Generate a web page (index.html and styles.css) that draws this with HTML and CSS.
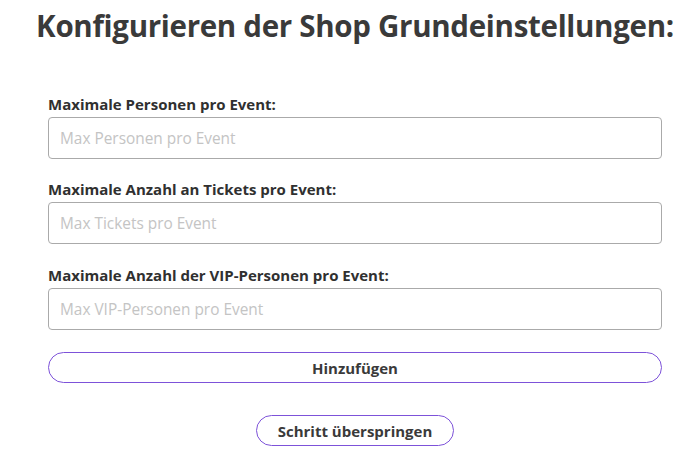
FILE: index.html
```html
<!DOCTYPE html>
<html lang="de">
<head>
<meta charset="utf-8">
<link rel="stylesheet" href="styles.css">
</head>
<body>
<div class="page">
  <h1 class="title">Konfigurieren der Shop Grundeinstellungen:</h1>
  <form class="form">
    <div class="field">
      <label class="label">Maximale Personen pro Event:</label>
      <input class="input" type="text" placeholder="Max Personen pro Event">
    </div>
    <div class="field">
      <label class="label">Maximale Anzahl an Tickets pro Event:</label>
      <input class="input" type="text" placeholder="Max Tickets pro Event">
    </div>
    <div class="field">
      <label class="label">Maximale Anzahl der VIP-Personen pro Event:</label>
      <input class="input" type="text" placeholder="Max VIP-Personen pro Event">
    </div>
    <button class="btn btn-wide" type="button">Hinzufügen</button>
    <div class="skip-row">
      <button class="btn btn-skip" type="button">Schritt überspringen</button>
    </div>
  </form>
</div>
</body>
</html>
```
FILE: styles.css
```css
html, body {
  margin: 0;
  padding: 0;
  background: #ffffff;
}
body {
  font-family: "Open Sans", "Noto Sans", sans-serif;
  color: #3a3a3a;
  overflow: hidden;
}
.page {
  width: 614px;
  margin-left: 48px;
  display: flex;
  flex-direction: column;
}
.title {
  margin: 6px -40px 0 -40px;
  font-size: 29.5px;
  font-weight: 700;
  text-align: center;
  line-height: 40px;
  color: #3a3a3a;
  white-space: nowrap;
  letter-spacing: -0.3px;
}
.form {
  margin-top: 49px;
  display: flex;
  flex-direction: column;
}
.field {
  display: flex;
  flex-direction: column;
  margin-bottom: 21px;
}
.field:nth-child(2) {
  margin-bottom: 22px;
}
.label {
  font-size: 15px;
  font-weight: 700;
  line-height: 18px;
  margin-bottom: 4px;
  color: #303030;
}
.input {
  height: 42px;
  box-sizing: border-box;
  border: 1px solid #aaaaaa;
  border-radius: 4px;
  padding: 0 11px;
  font-family: inherit;
  font-size: 15.4px;
  color: #333;
  outline: none;
}
.input::placeholder {
  color: #c4c4c4;
}
.btn {
  box-sizing: border-box;
  background: #fff;
  border: 1px solid #7d52d9;
  border-radius: 16px;
  font-family: inherit;
  font-weight: 700;
  font-size: 15px;
  color: #3a3a3a;
  padding: 0;
  cursor: pointer;
}
.btn-wide {
  margin-top: 1px;
  height: 31px;
  width: 100%;
}
.skip-row {
  display: flex;
  justify-content: center;
  margin-top: 32px;
}
.btn-skip {
  width: 198px;
  height: 31px;
}
```
